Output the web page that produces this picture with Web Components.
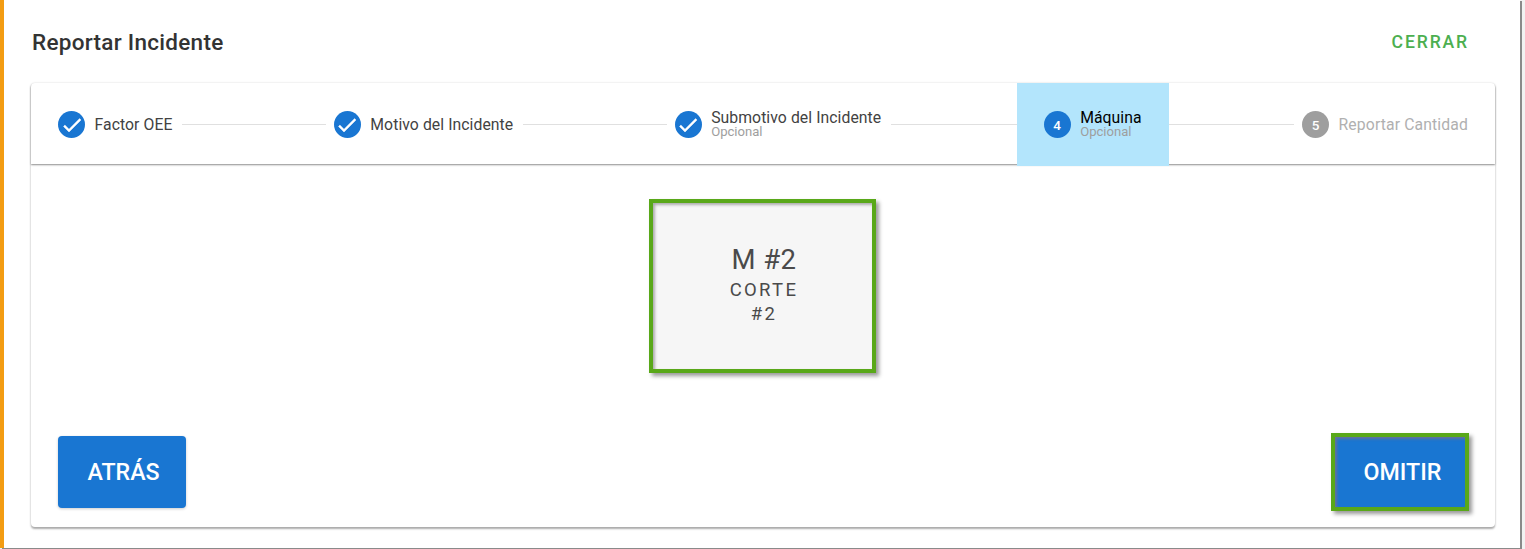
<!DOCTYPE html>
<html lang="es">
<head>
<meta charset="utf-8">
<title>Reportar Incidente</title>
<style>
  html, body { margin: 0; height: 100%; background: #f2f2f2; }
  body { font-family: Roboto, "Liberation Sans", sans-serif; overflow: hidden; }
</style>
</head>
<body>
<script>
const CHECK = `<svg viewBox="0 0 24 24" width="24" height="24"><path fill="#fff" stroke="#fff" stroke-width=".45" d="M21 7L9 19l-5.5-5.5 1.41-1.41L9 16.17 19.59 5.59 21 7z"/></svg>`

class RpDialog extends HTMLElement {
  constructor() {
    super()
    const template = document.createElement('template')
    template.innerHTML = `
      <style>
        :host {
          display: flex;
          flex-direction: column;
          box-sizing: border-box;
          width: 1520px;
          height: 548px;
          background: #fff;
          border-left: 4px solid #f39c12;
          box-shadow: 2px 1px 0 0 #8a8a8a;
          padding: 0 25px 21px 27px;
        }
        header {
          display: flex;
          align-items: center;
          justify-content: space-between;
          height: 83px;
          flex: none;
          padding: 2px 26px 0 1px;
          box-sizing: border-box;
        }
        h1 {
          margin: 0;
          font: 500 22.5px/1 Roboto, sans-serif;
          letter-spacing: .28px;
          color: #333;
        }
        a {
          font: 500 17.6px/1 Roboto, sans-serif;
          letter-spacing: 1.85px;
          color: #4caf50;
        }
      </style>
      <header>
        <h1>Reportar Incidente</h1>
        <a>CERRAR</a>
      </header>
      <slot></slot>
    `
    this.attachShadow({ mode: 'open' }).appendChild(template.content.cloneNode(true))
  }
}
customElements.define('rp-dialog', RpDialog)

class RpStepper extends HTMLElement {
  constructor() {
    super()
    const template = document.createElement('template')
    template.innerHTML = `
      <style>
        :host {
          display: flex;
          flex-direction: column;
          flex: 1;
          background: #fff;
          border-radius: 4px;
          box-shadow: 0 2px 2px 0 rgba(0,0,0,.32), 0 0 3px 0 rgba(0,0,0,.07);
        }
        .head {
          display: flex;
          align-items: flex-start;
          height: 81px;
          flex: none;
          border-radius: 4px 4px 0 0;
          box-shadow: 0 1px 2px 0 rgba(0,0,0,.45);
          position: relative;
        }
        .body {
          flex: 1;
          display: flex;
          flex-direction: column;
          min-height: 0;
        }
      </style>
      <div class="head"><slot name="steps"></slot></div>
      <div class="body"><slot></slot></div>
    `
    this.attachShadow({ mode: 'open' }).appendChild(template.content.cloneNode(true))
  }
}
customElements.define('rp-stepper', RpStepper)

class RpStep extends HTMLElement {
  constructor() {
    super()
    const template = document.createElement('template')
    template.innerHTML = `
      <style>
        :host {
          display: flex;
          align-items: center;
          flex: none;
          height: 83px;
          padding: 0 27px;
          position: relative;
          z-index: 1;
          font-size: 15.75px;
          letter-spacing: .07px;
          color: #424242;
        }
        :host([active]) { background: #b3e5fc; color: #000; }
        :host([pending]) { color: #b0b0b0; letter-spacing: .12px; }
        .icon {
          width: 27px;
          height: 27px;
          border-radius: 50%;
          background: #1976d2;
          color: #fff;
          display: flex;
          align-items: center;
          justify-content: center;
          font-size: 13.5px;
          font-weight: 500;
          margin-right: 9.5px;
          flex: none;
        }
        :host([pending]) .icon { background: #9e9e9e; }
        .label { display: flex; flex-direction: column; line-height: 15px; }
        .label ::slotted([slot=sub]) {
          font-size: 13.1px;
          line-height: 14px;
          letter-spacing: 0;
          color: #9e9e9e;
        }
      </style>
      <span class="icon" part="icon"></span>
      <span class="label"><slot></slot><slot name="sub"></slot></span>
    `
    this.attachShadow({ mode: 'open' }).appendChild(template.content.cloneNode(true))
  }

  connectedCallback() {
    const icon = this.shadowRoot.querySelector('.icon')
    if (this.hasAttribute('num')) icon.textContent = this.getAttribute('num')
    else icon.innerHTML = CHECK
  }
}
customElements.define('rp-step', RpStep)

class RpDivider extends HTMLElement {
  constructor() {
    super()
    const template = document.createElement('template')
    template.innerHTML = `
      <style>
        :host {
          display: block;
          flex: 1;
          height: 1px;
          margin: 41px -19px 0 -17px;
          background: #e0e0e0;
        }
        :host([before-active]) { margin-right: -18px; }
        :host([after-active]) { margin-left: -18px; }
      </style>
    `
    this.attachShadow({ mode: 'open' }).appendChild(template.content.cloneNode(true))
  }
}
customElements.define('rp-divider', RpDivider)

class RpMachine extends HTMLElement {
  constructor() {
    super()
    const template = document.createElement('template')
    template.innerHTML = `
      <style>
        :host {
          display: flex;
          flex-direction: column;
          align-items: center;
          justify-content: center;
          box-sizing: border-box;
          width: 227px;
          height: 174px;
          padding-left: 3px;
          background: #f6f6f6;
          border: 4px solid #59a819;
          box-shadow: 3px 3px 4px rgba(0,0,0,.4), inset 2px 2px 3px rgba(0,0,0,.3);
          color: #4a4a4a;
          text-align: center;
        }
        .code { font-size: 27.5px; line-height: 32px; letter-spacing: .4px; margin-top: -2px; }
        .name { font-size: 18.5px; line-height: 24px; letter-spacing: 2.3px; margin-top: 2px; }
      </style>
      <div class="code"><slot name="code"></slot></div>
      <div class="name"><slot></slot></div>
    `
    this.attachShadow({ mode: 'open' }).appendChild(template.content.cloneNode(true))
  }
}
customElements.define('rp-machine', RpMachine)

class RpButton extends HTMLElement {
  constructor() {
    super()
    const template = document.createElement('template')
    template.innerHTML = `
      <style>
        :host {
          display: inline-flex;
          align-items: center;
          justify-content: center;
          box-sizing: border-box;
          width: 128px;
          height: 72px;
          padding: 2px 0 0 3px;
          background: #1976d2;
          color: #fff;
          border-radius: 4px;
          font: 500 23.2px/1 Roboto, sans-serif;
          box-shadow: 0 1px 3px rgba(0,0,0,.2);
        }
        :host([focused]) {
          width: 138px;
          height: 78px;
          padding-left: 5px;
          border: 4px solid #59a819;
          border-radius: 0;
          box-shadow: 3px 3px 4px rgba(0,0,0,.4), inset 2px 2px 3px rgba(150,110,120,.6);
        }
      </style>
      <slot></slot>
    `
    this.attachShadow({ mode: 'open' }).appendChild(template.content.cloneNode(true))
  }
}
customElements.define('rp-button', RpButton)

class RpPanel extends HTMLElement {
  constructor() {
    super()
    const template = document.createElement('template')
    template.innerHTML = `
      <style>
        :host {
          display: flex;
          flex-direction: column;
          flex: 1;
          padding: 35px 26px 16px 27px;
        }
        .main { flex: 1; display: flex; justify-content: center; align-items: flex-start; padding-right: 2px; }
        .actions { display: flex; justify-content: space-between; align-items: center; }
      </style>
      <div class="main"><slot></slot></div>
      <div class="actions"><slot name="actions"></slot></div>
    `
    this.attachShadow({ mode: 'open' }).appendChild(template.content.cloneNode(true))
  }
}
customElements.define('rp-panel', RpPanel)
</script>

<rp-dialog>
  <rp-stepper>
    <rp-step slot="steps">Factor OEE</rp-step>
    <rp-divider slot="steps"></rp-divider>
    <rp-step slot="steps">Motivo del Incidente</rp-step>
    <rp-divider slot="steps"></rp-divider>
    <rp-step slot="steps">Submotivo del Incidente<small slot="sub">Opcional</small></rp-step>
    <rp-divider slot="steps" before-active></rp-divider>
    <rp-step slot="steps" num="4" active>Máquina<small slot="sub">Opcional</small></rp-step>
    <rp-divider slot="steps" after-active></rp-divider>
    <rp-step slot="steps" num="5" pending>Reportar Cantidad</rp-step>
    <rp-panel>
      <rp-machine>
        <span slot="code">M #2</span>
        CORTE<br>#2
      </rp-machine>
      <rp-button slot="actions">ATRÁS</rp-button>
      <rp-button slot="actions" focused>OMITIR</rp-button>
    </rp-panel>
  </rp-stepper>
</rp-dialog>
</body>
</html>
